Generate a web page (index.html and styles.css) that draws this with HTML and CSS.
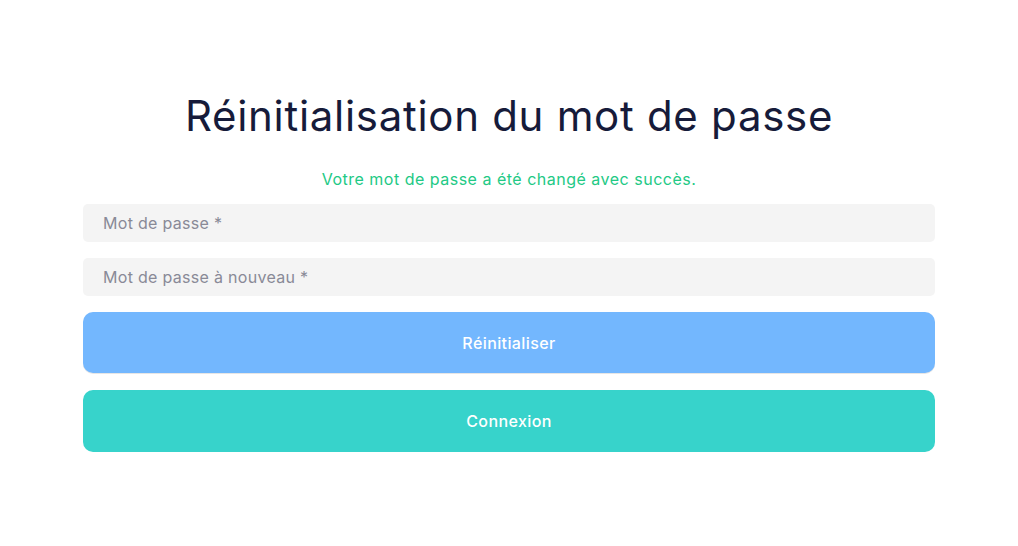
FILE: index.html
```html
<!DOCTYPE html>
<html lang="fr">
<head>
<meta charset="utf-8">
<title>Réinitialisation du mot de passe</title>
<link rel="stylesheet" href="styles.css">
</head>
<body>
<main class="page">
  <h1 class="title">Réinitialisation du mot de passe</h1>
  <p class="success">Votre mot de passe a été changé avec succès.</p>
  <form class="form">
    <input class="field" type="password" placeholder="Mot de passe *">
    <input class="field" type="password" placeholder="Mot de passe à nouveau *">
    <button class="btn btn-reset" type="button">Réinitialiser</button>
    <button class="btn btn-login" type="button">Connexion</button>
  </form>
</main>
</body>
</html>
```
FILE: styles.css
```css
* { box-sizing: border-box; }
html, body { margin: 0; padding: 0; background: #ffffff; }
body { font-family: "Inter", "Noto Sans", sans-serif; }
.page {
  width: 852px;
  margin: 0 auto;
  padding-top: 87px;
}
.title {
  margin: 0;
  text-align: center;
  font-size: 42px;
  letter-spacing: 0.7px;
  line-height: 58px;
  font-weight: 400;
  color: #161b3a;
}
.success {
  margin: 24px 0 0;
  text-align: center;
  font-size: 16px;
  letter-spacing: 0.5px;
  line-height: 20px;
  color: #22c985;
}
.form {
  margin-top: 15px;
  display: flex;
  flex-direction: column;
}
.field {
  height: 38px;
  border: none;
  border-radius: 5px;
  background: #f4f4f4;
  padding: 0 20px;
  font-family: inherit;
  font-size: 16px;
  letter-spacing: 0.3px;
  color: #333;
  margin-bottom: 16px;
  outline: none;
}
.field::placeholder { color: #898a97; }
.btn {
  height: 61px;
  border: none;
  border-radius: 10px;
  color: #ffffff;
  font-family: inherit;
  font-size: 16px;
  letter-spacing: 0.4px;
  font-weight: 500;
  cursor: pointer;
}
.btn-reset { background: #73b7fe; box-shadow: 0 1px 0 #e6e6e6; }
.btn-login { background: #37d3cb; margin-top: 17px; height: 62px; }
```
